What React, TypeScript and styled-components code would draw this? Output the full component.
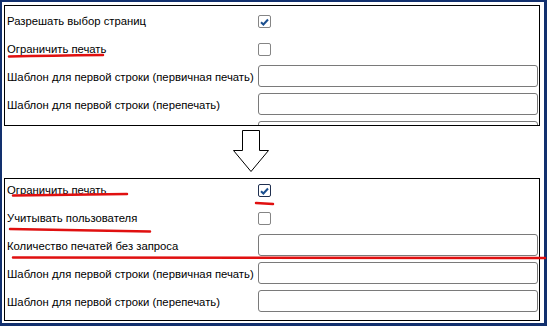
import React from "react";
import styled, { createGlobalStyle } from "styled-components";

const Global = createGlobalStyle`
  html, body { margin: 0; padding: 0; background: #ffffff; }
  body { font-family: "Liberation Sans", Arial, sans-serif; }
`;

const Frame = styled.div`
  position: relative;
  box-sizing: border-box;
  width: 547px;
  height: 326px;
  background: #ffffff;
  border-style: solid;
  border-color: #12306e;
  border-width: 2px 3px 3px 2px;
  padding: 3px 4px 2px 2px;
  display: flex;
  flex-direction: column;
`;

const Panel = styled.div<{ $h: number }>`
  box-sizing: border-box;
  height: ${(p) => p.$h}px;
  border: 1px solid #000000;
  overflow: hidden;
  flex: none;
`;

const List = styled.div<{ $shift: number }>`
  display: flex;
  flex-direction: column;
  margin-top: ${(p) => p.$shift}px;
`;

const Row = styled.div`
  display: grid;
  grid-template-columns: 251px 1fr;
  height: 28px;
  align-items: center;
  padding-left: 2px;
  padding-right: 1px;
`;

const Label = styled.span`
  font-size: 11.3px;
  line-height: 14px;
  padding-bottom: 2px;
  color: #000000;
  white-space: nowrap;
`;

const Box = styled.span<{ $dark?: boolean }>`
  box-sizing: border-box;
  width: 13px;
  height: 13px;
  margin-bottom: 1px;
  border: 1px solid ${(p) => (p.$dark ? "#1f2f4f" : "#858585")};
  border-radius: 2px;
  background: #ffffff;
  display: flex;
  align-items: center;
  justify-content: center;
`;

const Field = styled.span`
  box-sizing: border-box;
  display: block;
  height: 22px;
  margin-bottom: 4px;
  border: 1px solid #7a7a7a;
  border-radius: 3px;
  background: #ffffff;
`;

const ArrowArea = styled.div`
  height: 52px;
  flex: none;
  padding: 3px 0 0 228px;
  box-sizing: border-box;
`;

const Marks = styled.svg`
  position: absolute;
  left: -2px;
  top: -2px;
  width: 547px;
  height: 326px;
  pointer-events: none;
`;

function Check({ checked, dark }: { checked?: boolean; dark?: boolean }) {
  return (
    <Box $dark={dark}>
      {checked && (
        <svg width="9" height="8" viewBox="0 0 9 8">
          <path d="M1 4.2 L3.4 6.5 L8 1.5" fill="none" stroke="#1b4f8f" strokeWidth="2" />
        </svg>
      )}
    </Box>
  );
}

type Item = { label: string; kind: "check" | "field"; checked?: boolean; dark?: boolean };

const before: Item[] = [
  { label: "Разрешать выбор страниц", kind: "check", checked: true },
  { label: "Ограничить печать", kind: "check" },
  { label: "Шаблон для первой строки (первичная печать)", kind: "field" },
  { label: "Шаблон для первой строки (перепечать)", kind: "field" },
  { label: "", kind: "field" },
];

const after: Item[] = [
  { label: "Ограничить печать", kind: "check", checked: true, dark: true },
  { label: "Учитывать пользователя", kind: "check" },
  { label: "Количество печатей без запроса", kind: "field" },
  { label: "Шаблон для первой строки (первичная печать)", kind: "field" },
  { label: "Шаблон для первой строки (перепечать)", kind: "field" },
];

function Rows({ items }: { items: Item[] }) {
  return (
    <>
      {items.map((it, i) => (
        <Row key={i}>
          <Label>{it.label}</Label>
          {it.kind === "check" ? <Check checked={it.checked} dark={it.dark} /> : <Field />}
        </Row>
      ))}
    </>
  );
}

export default function App() {
  return (
    <>
      <Global />
      <Frame>
        <Panel $h={121}>
          <List $shift={2}>
            <Rows items={before} />
          </List>
        </Panel>
        <ArrowArea>
          <svg width="38" height="44" viewBox="0 0 38 44">
            <polygon
              points="10.5,1.5 27.5,1.5 27.5,21.5 36.5,21.5 19,42.5 1.5,21.5 10.5,21.5"
              fill="#ffffff"
              stroke="#000000"
              strokeWidth="1"
            />
          </svg>
        </ArrowArea>
        <Panel $h={143}>
          <List $shift={-2}>
            <Rows items={after} />
          </List>
        </Panel>
        <Marks viewBox="0 0 547 326">
          <g fill="none" stroke="#e01010" strokeLinecap="round">
            <path d="M9 56.5 Q50 55.5 103 55" strokeWidth="2.5" />
            <path d="M13 195.5 Q70 194.5 127 194" strokeWidth="2.5" />
            <path d="M256 203 Q265 203.5 273 204" strokeWidth="2.5" />
            <path d="M10 229 Q80 230.5 150 231.5" strokeWidth="2.5" />
            <path d="M13 257.5 Q280 257 545 258" strokeWidth="2.5" />
          </g>
        </Marks>
      </Frame>
    </>
  );
}
